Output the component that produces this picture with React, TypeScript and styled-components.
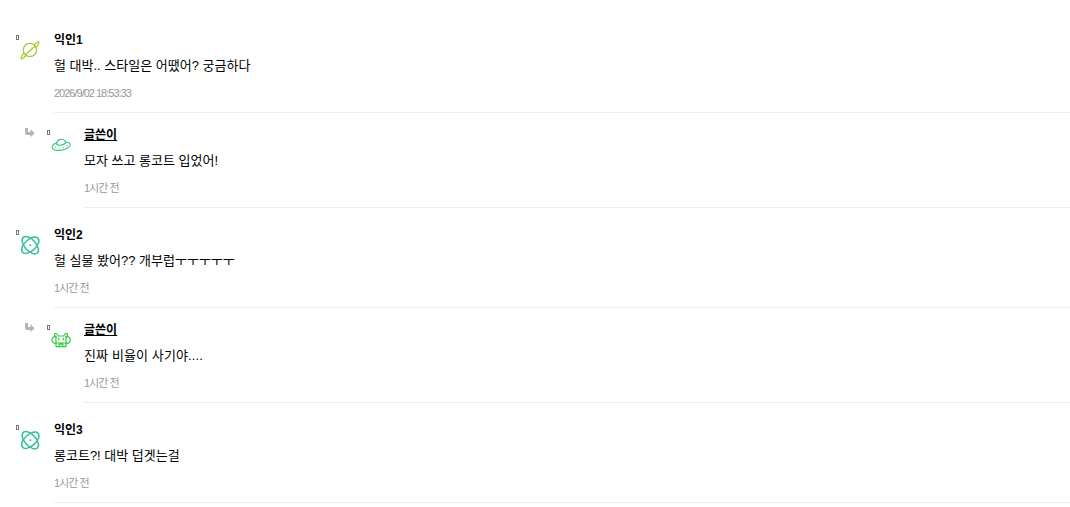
import React from "react";
import styled, { createGlobalStyle } from "styled-components";

const GlobalStyle = createGlobalStyle`
  * {
    box-sizing: border-box;
  }
  body {
    margin: 0;
    background: #fff;
    overflow: hidden;
    font-family: "Liberation Sans", "Noto Sans CJK KR", sans-serif;
  }
`;

const CommentList = styled.div`
  height: 507px;
  padding-top: 13px;
  overflow: hidden;
`;

const CommentRow = styled.div<{ $reply?: boolean }>`
  display: flex;
  height: ${(p) => (p.$reply ? 95 : 100)}px;
  padding-top: ${(p) => (p.$reply ? 12 : 17)}px;
  padding-left: ${(p) => (p.$reply ? 24 : 16)}px;
`;

const ArrowBox = styled.div`
  width: 23px;
  padding-top: 2px;
  svg {
    display: block;
  }
`;

const IconBox = styled.div<{ $reply?: boolean }>`
  display: flex;
  align-items: flex-start;
  width: ${(p) => (p.$reply ? 37 : 38)}px;
  padding-top: 5px;
`;

const Marker = styled.span`
  width: 3px;
  height: 5px;
  border: 1px solid #777;
`;

const Avatar = styled.svg`
  display: block;
  width: 20px;
  height: 20px;
  margin-top: 5px;
  margin-left: 1px;
  fill: none;
  overflow: visible;
  stroke-linecap: round;
  stroke-linejoin: round;
`;

const Content = styled.div`
  flex: 1;
  border-bottom: 1px solid #eee;
`;

const Name = styled.div<{ $writer?: boolean }>`
  height: 20px;
  line-height: 20px;
  font-size: 12px;
  font-weight: bold;
  color: #000;
  text-decoration: ${(p) => (p.$writer ? "underline" : "none")};
`;

const Body = styled.div<{ $spacing?: number }>`
  margin-top: 6px;
  height: 20px;
  line-height: 20px;
  font-size: 13px;
  letter-spacing: ${(p) => p.$spacing || 0}px;
  color: #000;
  white-space: nowrap;
`;

const Time = styled.div`
  margin-top: 7px;
  height: 20px;
  line-height: 20px;
  font-size: 11px;
  letter-spacing: -1px;
  color: #999;
`;

const ReplyArrow = () => (
  <svg width="11" height="11" viewBox="0 0 11 11" fill="#b3b5ae">
    <path d="M1 1h3v4h2.500V2l4 4.200-4 4V8H3Q1 8 1 6z" />
  </svg>
);

const Planet = () => (
  <Avatar viewBox="0 0 20 20" stroke="#a5cb35" strokeWidth="1.3">
    <circle cx="9.900" cy="10" r="6.600" />
    <path d="M14.200 4.800C16.500 2.400 18.300 1.400 18.800 2C19.300 2.800 18.300 4.900 16.300 7.300M14.800 6.200L5.300 14.900M5.800 15.500C3.800 18 1.900 19.300 1.300 18.600C.8 17.900 1.800 15.600 3.700 13.300" />
  </Avatar>
);

const Ufo = () => (
  <Avatar viewBox="0 0 20 20" stroke="#43c580" strokeWidth="1.2">
    <path d="M5.700 7.900C2.700 9 1 10.800 1.200 12.500C1.600 15 5.600 16 10.600 15.100C15.800 14.200 19.400 11.600 19.100 9.300C18.800 7.500 17 6.900 14.500 7" />
    <path d="M5.700 9.200C5.700 6.100 7.500 4.500 9.700 4.300C12 4.100 14.100 5.300 14.700 8C12.200 10.400 8.100 11 5.700 9.200z" />
    <path d="M4.300 12.200h.1M8.200 13h.1M12.200 12.300h.1M16 10.200h.1" />
  </Avatar>
);

const Atom = () => (
  <Avatar viewBox="0 0 20 20" stroke="#31c29b" strokeWidth="1.5">
    <ellipse cx="10.300" cy="10.200" rx="10.500" ry="5.600" transform="rotate(48 10.300 10.200)" />
    <ellipse cx="10.300" cy="10.200" rx="10.500" ry="5.600" transform="rotate(-42 10.300 10.200)" />
    <circle cx="10.300" cy="10.200" r=".7" fill="#31c29b" strokeWidth=".5" />
  </Avatar>
);

const Monster = () => (
  <Avatar viewBox="0 0 20 20" stroke="#2fcb3a" strokeWidth="1.2">
    <path d="M3.700 6.500V3.500H5.500L7.500 6h5L14.500 3.500h1.800v3" />
    <path d="M5 7C2.500 6 1 7.600 1 9.800C1 12 2.200 13.500 4.700 13.300M15 7C17.500 6 19.200 7.600 19.200 9.800C19.200 12 18 13.500 15.300 13.300" />
    <path d="M5 6v7h10V6M7.800 8v2M12.200 8v2M5 13.300v3.300h3.200v-2.500h3.600v2.500H15v-3.300M8.200 16.600h3.600" />
  </Avatar>
);

const comments = [
  { name: "익인1", text: "헐 대박.. 스타일은 어땠어? 궁금하다", time: "2026/9/02 18:53:33", Icon: Planet },
  { name: "글쓴이", text: "모자 쓰고 롱코트 입었어!", time: "1시간 전", Icon: Ufo, reply: true },
  { name: "익인2", text: "헐 실물 봤어?? 개부럽ㅜㅜㅜㅜㅜ", time: "1시간 전", Icon: Atom },
  { name: "글쓴이", text: "진짜 비율이 사기야....", time: "1시간 전", Icon: Monster, reply: true, spacing: 0.12 },
  { name: "익인3", text: "롱코트?! 대박 덥겟는걸", time: "1시간 전", Icon: Atom },
];

const App = () => {
  return (
    <>
      <GlobalStyle />
      <CommentList>
        {comments.map(({ name, text, time, Icon, reply, spacing }, index) => (
          <CommentRow key={index} $reply={reply}>
            {reply && (
              <ArrowBox>
                <ReplyArrow />
              </ArrowBox>
            )}
            <IconBox $reply={reply}>
              <Marker />
              <Icon />
            </IconBox>
            <Content>
              <Name $writer={reply}>{name}</Name>
              <Body $spacing={spacing}>{text}</Body>
              <Time>{time}</Time>
            </Content>
          </CommentRow>
        ))}
      </CommentList>
    </>
  );
};

export default App;
